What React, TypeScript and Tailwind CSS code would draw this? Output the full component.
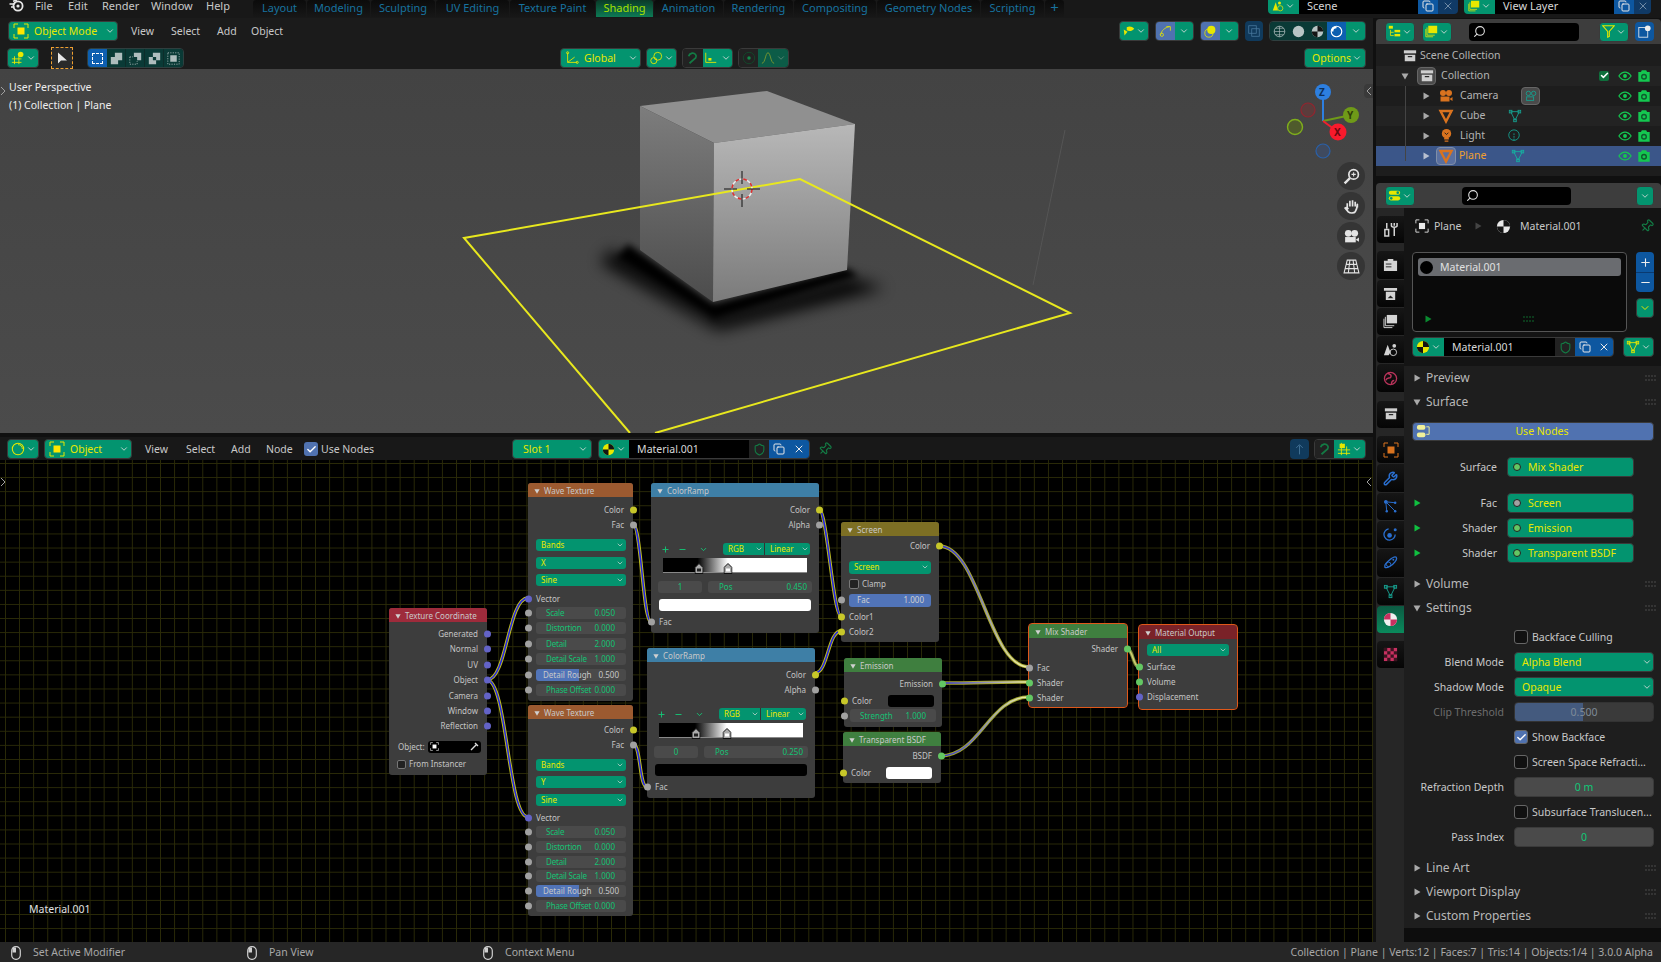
import type { ReactNode } from "react";
import { ChevronDown, Copy, Pin, Search, X, Check, Plus, Minus, Shield, Wrench } from "lucide-react";

const Y = "bg-[#c7c729]";
const G = "bg-[#63c763]";
const P = "bg-[#6363c7]";
const N = "bg-[#a1a1a1]";

// small helpers for the blender icons
function Ic({ s = 14, children, className = "" }: { s?: number; children: ReactNode; className?: string }) {
	return (
		<svg viewBox="0 0 16 16" width={s} height={s} fill="none" className={`shrink-0 ${className}`}>
			{children}
		</svg>
	);
}

const Corners = ({ c, s = 16 }: { c: string; s?: number }) => (
	<Ic s={s}>
		<path d="M1 5V1h4M11 1h4v4M15 11v4h-4M5 15H1v-4" stroke={c} strokeWidth="1" />
		<rect x="4.5" y="4.5" width="7" height="7" fill={c === "#e8e800" ? "#ffe600" : c} />
	</Ic>
);

const MatIcon = ({ c, s = 15 }: { c: string; s?: number }) => (
	<Ic s={s}>
		<circle cx="8" cy="8" r="7" fill={c} />
		<path d="M8 8V1A7 7 0 0 1 15 8ZM8 8V15A7 7 0 0 1 1 8Z" fill="#141414" />
	</Ic>
);

const MeshIcon = ({ c, s = 14 }: { c: string; s?: number }) => (
	<Ic s={s}>
		<path d="M3 3h10L8 13Z" stroke={c} strokeWidth="1" />
		<rect x="1.5" y="1.5" width="3" height="3" fill="#0000" stroke={c} />
		<rect x="11.5" y="1.5" width="3" height="3" fill="#0000" stroke={c} />
		<rect x="6.5" y="11.5" width="3" height="3" fill="#0000" stroke={c} />
	</Ic>
);

const OrangeTri = () => (
	<Ic s={16}>
		<path d="M2.5 3h11L8 13.5Z" stroke="#d9731f" strokeWidth="2.4" />
	</Ic>
);

const Eye = ({ dim = false }: { dim?: boolean }) => (
	<Ic s={14}>
		<path d="M1 8c2-3 4.5-4.5 7-4.5S13 5 15 8c-2 3-4.5 4.5-7 4.5S3 11 1 8Z" stroke={dim ? "#12b84c" : "#14c850"} strokeWidth="1.3" />
		<circle cx="8" cy="8" r="2.2" fill={dim ? "#12b84c" : "#14c850"} />
	</Ic>
);

const RenderCam = () => (
	<Ic s={14}>
		<path d="M1.5 3.5h3l1-2h5l1 2h3v11h-13Z" fill="#14c850" />
		<circle cx="8" cy="8.8" r="3.4" fill="#0e5a2c" />
		<circle cx="8" cy="8.8" r="1.8" fill="#14c850" />
	</Ic>
);

const Chev = ({ c = "#dddddd", s = 10 }: { c?: string; s?: number }) => <ChevronDown size={s} color={c} strokeWidth={2} className="shrink-0" />;

const Tri = ({ open = false, c = "#a9a9a9", s = 8 }: { open?: boolean; c?: string; s?: number }) => (
	<svg width={s} height={s} viewBox="0 0 8 8" className="shrink-0">
		<path d={open ? "M0.5 1.5h7L4 7.5Z" : "M1.5 0.5v7L7.5 4Z"} fill={c} />
	</svg>
);

const Dots = () => (
	<svg width="11" height="6" viewBox="0 0 11 6" className="shrink-0">
		{[0.5, 3.5, 6.5, 9.5].map(x => [0.5, 4.5].map(y => <rect key={`${x}-${y}`} x={x} y={y} width="1" height="1" fill="#777" />))}
	</svg>
);

function Teal({ className = "", children }: { className?: string; children: ReactNode }) {
	return (
		<div className={`flex h-[20px] shrink-0 items-center rounded-[4px] border border-[#3a3a3a] bg-[#03946f] text-[#e8e800] ${className}`}>
			{children}
		</div>
	);
}

const TopTab = ({ label, w, active = false }: { label: string; w: string; active?: boolean }) => (
	<div
		className={`flex h-[17px] shrink-0 items-center justify-center rounded-t-[3px] pb-[2px] ${w} ${
			active ? "bg-[linear-gradient(#0a3a28,#0d7a55)] text-[#a6e000]" : "bg-[linear-gradient(#0b0b0b,#171717)] text-[#17729f]"
		}`}
	>
		{label}
	</div>
);

function TopBar() {
	return (
		<div className="flex h-[18px] shrink-0 items-start overflow-hidden bg-[#181818] text-[11px]">
			<div className="ml-[9px] flex h-[11px] w-[26px] items-center">
				<svg width="15" height="13" viewBox="0 0 15 13">
					<circle cx="9" cy="7" r="4.6" fill="none" stroke="#e6e6e6" strokeWidth="1.8" />
					<circle cx="9" cy="7" r="1.6" fill="#e6e6e6" />
					<path d="M0.5 5h5M2 8h3.5M4 2.2l4-1.2" stroke="#e6e6e6" strokeWidth="1.5" />
				</svg>
			</div>
			<div className="flex h-[11px] items-center text-[#c8c8c8]">
				<div className="w-[33px]">File</div>
				<div className="w-[34px]">Edit</div>
				<div className="w-[49px]">Render</div>
				<div className="w-[55px]">Window</div>
				<div className="w-[47px]">Help</div>
			</div>
			<div className="flex gap-px">
				<TopTab label="Layout" w="w-[53px]" />
				<TopTab label="Modeling" w="w-[63px]" />
				<TopTab label="Sculpting" w="w-[64px]" />
				<TopTab label="UV Editing" w="w-[73px]" />
				<TopTab label="Texture Paint" w="w-[85px]" />
				<TopTab label="Shading" w="w-[57px]" active />
				<TopTab label="Animation" w="w-[69px]" />
				<TopTab label="Rendering" w="w-[69px]" />
				<TopTab label="Compositing" w="w-[82px]" />
				<TopTab label="Geometry Nodes" w="w-[103px]" />
				<TopTab label="Scripting" w="w-[63px]" />
				<TopTab label="+" w="w-[19px] text-[15px]" />
			</div>
			<div className="ml-auto mr-[10px] flex gap-[6px]">
				<SceneField label="Scene" scene />
				<SceneField label="View Layer" />
			</div>
		</div>
	);
}

function SceneField({ label, scene = false }: { label: string; scene?: boolean }) {
	return (
		<div className="-mt-[6px] flex h-[20px] overflow-hidden rounded-b-[4px]">
			<div className="flex w-[31px] items-center justify-center gap-px bg-[#03946f] pt-[4px]">
				{scene ? (
					<Ic s={12}>
						<path d="M1 14 5 3l3 11Z" fill="#e8e800" />
						<circle cx="10" cy="4" r="2" fill="#e8e800" />
						<circle cx="11" cy="11" r="3.5" stroke="#e8e800" />
					</Ic>
				) : (
					<Ic s={12}>
						<path d="M4 1h11v9H4Z" fill="#e8e800" />
						<path d="M2.5 3v9.5H12M1 5v9.5h9" stroke="#e8e800" />
					</Ic>
				)}
				<Chev />
			</div>
			<div className="flex w-[119px] items-center bg-black pl-[8px] pt-[2px] text-[#d8d8d8]">{label}</div>
			<div className="flex w-[20px] items-center justify-center bg-[#0d57a0] pt-[4px]">
				<Copy size={12} color="#e8e8e8" />
			</div>
			<div className={`flex items-center justify-center bg-[#103a66] pt-[4px] ${scene ? "w-[20px]" : "w-[17px]"}`}>
				<X size={12} color="#6f8aa5" />
			</div>
		</div>
	);
}

function SelectModes() {
	const cell = "flex h-full w-[19px] items-center justify-center border-r border-[#0d2d2a] bg-[#0a3a36]";
	return (
		<div className="ml-[14px] flex h-[20px] overflow-hidden rounded-[4px] border border-[#2f3f3f]">
			<div className="flex h-full w-[19px] items-center justify-center bg-[#0d5fb0]">
				<div className="h-[11px] w-[11px] border border-dashed border-white" />
			</div>
			<div className={cell}>
				<Ic s={13}>
					<path d="M1 6h5V1h9v9h-5v5H1Z" fill="#aebdbd" />
				</Ic>
			</div>
			<div className={cell}>
				<Ic s={13}>
					<path d="M6 6V1h9v9h-5V6Z" fill="#aebdbd" />
					<path d="M1 6h4M1 6v9h9v-4" stroke="#aebdbd" strokeDasharray="1.5 1.5" />
				</Ic>
			</div>
			<div className={cell}>
				<Ic s={13}>
					<path d="M1 6h5V1h9v9h-5v5H1ZM6 6v4h4V6Z" fill="#aebdbd" fillRule="evenodd" />
				</Ic>
			</div>
			<div className="flex h-full w-[19px] items-center justify-center bg-[#0a3a36]">
				<Ic s={13}>
					<rect x="1" y="1" width="14" height="14" stroke="#aebdbd" strokeDasharray="1.5 1.5" />
					<rect x="4" y="4" width="8" height="8" fill="#aebdbd" />
				</Ic>
			</div>
		</div>
	);
}

function ViewportHeader() {
	return (
		<div className="flex h-[51px] shrink-0 flex-col gap-[7px] bg-[#1b1b1b] pt-[3px]">
			<div className="flex h-[20px] items-center">
				<Teal className="ml-[8px] w-[110px] gap-[5px] pl-[4px]">
					<Corners c="#e8e800" />
					<span className="flex-1">Object Mode</span>
					<span className="pr-[2px]">
						<Chev />
					</span>
				</Teal>
				<div className="ml-[13px] flex text-[#c8c8c8]">
					<div className="w-[40px]">View</div>
					<div className="w-[46px]">Select</div>
					<div className="w-[34px]">Add</div>
					<div>Object</div>
				</div>
				<div className="ml-auto mr-[7px] flex items-center gap-[6px]">
					<Teal className="w-[30px] justify-center gap-px">
						<Ic s={12}>
							<path d="M5 3c4-2 7-1 10 2-3 3-6 4-10 2ZM1 6l5 3-4 5Z" fill="#e8e800" />
						</Ic>
						<Chev />
					</Teal>
					<div className="flex h-[20px] w-[39px] overflow-hidden rounded-[4px] border border-[#3a3a3a]">
						<div className="flex w-[19px] items-center justify-center bg-[#5072b0]">
							<Ic s={13}>
								<path d="M2 12C3 7 7 3 13 2M9 2h5v5" stroke="#e8e800" />
								<circle cx="3.5" cy="12" r="2" stroke="#e8e800" />
							</Ic>
						</div>
						<div className="flex flex-1 items-center justify-center bg-[#03946f]">
							<Chev />
						</div>
					</div>
					<div className="flex h-[20px] w-[39px] overflow-hidden rounded-[4px] border border-[#3a3a3a]">
						<div className="flex w-[19px] items-center justify-center bg-[#5072b0]">
							<Ic s={13}>
								<circle cx="9" cy="6" r="5" fill="#e8e800" />
								<circle cx="6" cy="10" r="5" stroke="#e8e800" />
							</Ic>
						</div>
						<div className="flex flex-1 items-center justify-center bg-[#03946f]">
							<Chev />
						</div>
					</div>
					<div className="flex h-[20px] w-[18px] items-center justify-center rounded-[4px] bg-[#103a5c]">
						<Ic s={12}>
							<rect x="1" y="1" width="10" height="10" stroke="#4a7ba0" />
							<rect x="5" y="5" width="10" height="10" stroke="#4a7ba0" />
						</Ic>
					</div>
					<div className="flex h-[20px] w-[97px] overflow-hidden rounded-[4px] border border-[#2f3f3f]">
						<div className="flex w-[19px] items-center justify-center bg-[#0a3a36]">
							<Ic s={13}>
								<circle cx="8" cy="8" r="6.5" stroke="#aebdbd" />
								<path d="M1.5 8h13M8 1.5v13M3 4h10M3 12h10" stroke="#aebdbd" strokeWidth=".8" />
							</Ic>
						</div>
						<div className="flex w-[19px] items-center justify-center bg-[#0a3a36]">
							<Ic s={13}>
								<circle cx="8" cy="8" r="7" fill="#b8c4c4" />
							</Ic>
						</div>
						<div className="flex w-[19px] items-center justify-center bg-[#0a3a36]">
							<MatIcon c="#b8c4c4" s={13} />
						</div>
						<div className="flex w-[19px] items-center justify-center bg-[#0d5fb0]">
							<Ic s={13}>
								<circle cx="8" cy="8" r="6.5" stroke="#fff" strokeWidth="1.4" />
								<path d="M3 8c0-3 2-5 5-5" stroke="#fff" strokeWidth="2.2" />
							</Ic>
						</div>
						<div className="flex flex-1 items-center justify-center bg-[#03946f]">
							<Chev />
						</div>
					</div>
				</div>
			</div>
			<div className="flex h-[20px] items-center">
				<Teal className="ml-[7px] w-[32px] justify-center gap-px">
					<Ic s={14}>
						<path d="M1 9h11M1 13h11M4 6v9M9 6v9" stroke="#e8e800" />
						<circle cx="11" cy="4" r="3.2" fill="#e8e800" />
					</Ic>
					<Chev />
				</Teal>
				<div className="ml-[12px] flex h-[22px] w-[22px] items-center justify-center border border-dashed border-[#f0a030] bg-[#2a2a2a]">
					<svg width="10" height="12" viewBox="0 0 10 12">
						<path d="M1 0.5v11l3-3 6 0Z" fill="#e8e8e8" />
					</svg>
				</div>
				<SelectModes />
				<Teal className="ml-[376px] w-[81px] gap-[5px] pl-[4px]">
					<Ic s={14}>
						<path d="M3 2v11h11M3 13l8-6" stroke="#e8e800" />
						<circle cx="3" cy="2" r="1.2" stroke="#e8e800" />
						<circle cx="14" cy="13" r="1.2" stroke="#e8e800" />
					</Ic>
					<span className="flex-1">Global</span>
					<span className="pr-[2px]">
						<Chev />
					</span>
				</Teal>
				<Teal className="ml-[5px] w-[31px] justify-center gap-px">
					<Ic s={14}>
						<circle cx="10" cy="6" r="4.5" stroke="#e8e800" />
						<circle cx="5.5" cy="11" r="3.5" stroke="#e8e800" />
					</Ic>
					<Chev />
				</Teal>
				<div className="ml-[5px] flex h-[20px] w-[51px] overflow-hidden rounded-[4px] border border-[#3a3a3a]">
					<div className="flex w-[20px] items-center justify-center bg-[#222]">
						<Ic s={14}>
							<path d="M4 14 11 8c2-3-1-6-4-5.5C5 3 3.5 4 3 6" stroke="#137a44" strokeWidth="2" />
						</Ic>
					</div>
					<div className="flex flex-1 items-center justify-center gap-[3px] bg-[#03946f]">
						<Ic s={14}>
							<path d="M2 2v11h12" stroke="#e8e800" />
							<rect x="5" y="8" width="3.5" height="3" fill="#e8e800" />
						</Ic>
						<Chev />
					</div>
				</div>
				<div className="ml-[5px] flex h-[20px] w-[51px] overflow-hidden rounded-[4px] border border-[#3a3a3a]">
					<div className="flex w-[19px] items-center justify-center bg-[#222]">
						<Ic s={14}>
							<circle cx="8" cy="8" r="6.5" stroke="#124a2c" />
							<circle cx="8" cy="8" r="2" fill="#138a4a" />
						</Ic>
					</div>
					<div className="flex flex-1 items-center justify-center gap-px bg-[#0c5c47]">
						<Ic s={14}>
							<path d="M1 14c4 0 4-12 7-12s3 12 7 12" stroke="#7f9a30" />
						</Ic>
						<Chev c="#5f8a7a" />
					</div>
				</div>
				<Teal className="ml-auto mr-[7px] w-[62px] justify-between pl-[7px] pr-[3px]">
					<span>Options</span>
					<Chev />
				</Teal>
			</div>
		</div>
	);
}

function Viewport() {
	return (
		<div className="relative h-[364px] shrink-0 overflow-hidden bg-[linear-gradient(#434343,#4b4b4b)]">
			<svg viewBox="0 69 1373 364" className="absolute inset-0 h-full w-full">
				<defs>
					<filter id="soft" x="-30%" y="-50%" width="160%" height="200%">
						<feGaussianBlur stdDeviation="8" />
					</filter>
					<filter id="tight" x="-30%" y="-50%" width="160%" height="200%">
						<feGaussianBlur stdDeviation="3.5" />
					</filter>
					<linearGradient id="left" x1="0" y1="0" x2="0" y2="1">
						<stop offset="0" stopColor="#7d7d7d" />
						<stop offset="1" stopColor="#4c4c4c" />
					</linearGradient>
					<linearGradient id="right" x1="0" y1="0" x2="0" y2="1">
						<stop offset="0" stopColor="#b8b8b8" />
						<stop offset="1" stopColor="#7b7b7b" />
					</linearGradient>
				</defs>
				<path d="M1065 130 1033 285" stroke="#555" strokeWidth="1" />
				<path d="M612 250 715 316 850 278 885 288 718 330 600 262Z" fill="#000" filter="url(#soft)" />
				<path d="M628 244 713 304 847 268 858 276 714 320 616 258Z" fill="#000" filter="url(#tight)" />
				<path d="M640 106 767 91 855 124 714 143Z" fill="#909090" />
				<path d="M640 106 714 143 713 302 640 250Z" fill="url(#left)" />
				<path d="M714 143 855 124 847 270 713 302Z" fill="url(#right)" />
				<path d="M630 433 464 238 800 179 1070 313 655 433" fill="none" stroke="#e8e81e" strokeWidth="2" />
				<circle cx="742" cy="189" r="10" fill="none" stroke="#e03030" strokeWidth="1.5" strokeDasharray="4 4" />
				<circle cx="742" cy="189" r="10" fill="none" stroke="#eee" strokeWidth="1.5" strokeDasharray="4 4" strokeDashoffset="4" />
				<path d="M742 171v13M742 194v13M724 189h13M747 189h13" stroke="#111" strokeWidth="1" />

				{/* gizmo */}
				<circle cx="1308" cy="110" r="7" fill="#5b3c3c" stroke="#92252f" strokeWidth="1.2" />
				<circle cx="1295" cy="127" r="7.5" fill="#4f5b2c" stroke="#7fae1c" strokeWidth="1.4" />
				<circle cx="1323" cy="151" r="7" fill="#3f4a5f" stroke="#2a60a8" strokeWidth="1.2" />
				<path d="M1323 121V92" stroke="#2d7fe0" strokeWidth="2" />
				<path d="M1323 121 1351 115" stroke="#6f9a18" strokeWidth="2" />
				<path d="M1323 121 1338 132" stroke="#f0202f" strokeWidth="2" />
				<circle cx="1323" cy="92" r="8" fill="#2d7fe0" />
				<circle cx="1351" cy="115" r="8" fill="#6f9a18" />
				<circle cx="1338" cy="132" r="8.5" fill="#f81a2c" />
			</svg>
			<div className="absolute left-[9px] top-[9px] leading-[18px] text-[#eeeeee]">
				User Perspective
				<br />
				(1) Collection | Plane
			</div>
			<div className="absolute left-[1319px] top-[17px] text-[10px] font-bold leading-[12px] text-[#0d2f5a]">Z</div>
			<div className="absolute left-[1347px] top-[40px] text-[10px] font-bold leading-[12px] text-[#2f3f08]">Y</div>
			<div className="absolute left-[1334px] top-[57px] text-[10px] font-bold leading-[12px] text-[#6a0810]">X</div>
			<div className="absolute left-0 top-[17px] text-[#999]">
				<svg width="6" height="10" viewBox="0 0 6 10">
					<path d="M1 1l4 4-4 4" stroke="#a0a0a0" fill="none" />
				</svg>
			</div>
			<div className="absolute right-0 top-[15px] flex h-[14px] w-[9px] items-center justify-center rounded-l-[4px] bg-[#3a3a3a]">
				<svg width="6" height="10" viewBox="0 0 6 10">
					<path d="M5 1 1 5l4 4" stroke="#a0a0a0" fill="none" />
				</svg>
			</div>
			<div className="absolute left-[1337px] top-[93px] flex flex-col gap-[2px]">
				<GizmoBtn>
					<circle cx="10" cy="6" r="4.5" stroke="#e4e4e4" strokeWidth="1.6" />
					<path d="M8 6h4M10 4v4" stroke="#e4e4e4" />
					<path d="M6.5 9.5 1.5 14.5" stroke="#e4e4e4" strokeWidth="2.2" />
				</GizmoBtn>
				<GizmoBtn>
					<path d="M4 9V5M6.5 8V2.5M9 8V2M11.5 8V3.5M13.5 9V6c0-1 0 4-2 7-1 1.5-5 1.5-6.5 0L2 9.5c1-1 2-.5 3 1" stroke="#e4e4e4" strokeWidth="1.6" />
				</GizmoBtn>
				<GizmoBtn>
					<circle cx="5" cy="5" r="3.2" fill="#e4e4e4" />
					<circle cx="11" cy="5" r="3.2" fill="#e4e4e4" />
					<rect x="2" y="8.5" width="10" height="5" fill="#e4e4e4" />
					<path d="M12 11l3-2v4Z" fill="#e4e4e4" />
				</GizmoBtn>
				<GizmoBtn>
					<path d="M4 2h8l3 12H1ZM2.5 6h11M1.7 10h12.6M6.5 2 5 14M9.5 2 11 14" stroke="#e4e4e4" strokeWidth="1" />
				</GizmoBtn>
			</div>
		</div>
	);
}

const GizmoBtn = ({ children }: { children: ReactNode }) => (
	<div className="flex h-[28px] w-[28px] items-center justify-center rounded-full bg-[#353535]">
		<Ic s={17}>{children}</Ic>
	</div>
);

function NodeHeader() {
	return (
		<div className="flex h-[23px] shrink-0 items-center bg-[#181818] pt-px">
			<Teal className="ml-[7px] w-[32px] justify-center gap-px">
				<Ic s={14}>
					<circle cx="8" cy="8" r="6.5" stroke="#e8e800" strokeWidth="1.2" />
					<path d="M8 3a5 5 0 0 1 5 5" stroke="#e8e800" />
				</Ic>
				<Chev />
			</Teal>
			<Teal className="ml-[5px] w-[88px] gap-[5px] pl-[4px]">
				<Corners c="#e8e800" />
				<span className="flex-1">Object</span>
				<span className="pr-[2px]">
					<Chev />
				</span>
			</Teal>
			<div className="ml-[13px] flex text-[#c8c8c8]">
				<div className="w-[41px]">View</div>
				<div className="w-[45px]">Select</div>
				<div className="w-[35px]">Add</div>
				<div className="w-[38px]">Node</div>
			</div>
			<div className="flex h-[14px] w-[14px] items-center justify-center rounded-[3px] bg-[#5072b0]">
				<Check size={11} color="#fff" strokeWidth={3} />
			</div>
			<span className="ml-[3px] text-[#c8c8c8]">Use Nodes</span>
			<Teal className="ml-[138px] w-[80px] justify-between pl-[10px] pr-[3px]">
				<span>Slot 1</span>
				<Chev />
			</Teal>
			<div className="ml-[6px] flex h-[20px] overflow-hidden rounded-[4px] border border-[#3a3a3a]">
				<div className="flex w-[30px] items-center justify-center gap-px bg-[#03946f]">
					<MatIcon c="#e8e800" s={13} />
					<Chev />
				</div>
				<div className="flex w-[120px] items-center bg-black pl-[8px] text-[#d8d8d8]">Material.001</div>
				<div className="flex w-[20px] items-center justify-center bg-[#222]">
					<Shield size={13} color="#137a44" />
				</div>
				<div className="flex w-[20px] items-center justify-center bg-[#0d57a0]">
					<Copy size={12} color="#e8e8e8" />
				</div>
				<div className="flex w-[20px] items-center justify-center bg-[#0d57a0]">
					<X size={12} color="#e8e8e8" />
				</div>
			</div>
			<Pin size={14} color="#137a44" className="ml-[8px] rotate-45" />
			<div className="ml-auto mr-[7px] flex items-center gap-[5px]">
				<div className="flex h-[20px] w-[19px] items-center justify-center rounded-[4px] bg-[#103a5c]">
					<Ic s={13}>
						<path d="M8 14V3M4 6l4-4 4 4" stroke="#4a7ba0" />
					</Ic>
				</div>
				<div className="flex h-[20px] w-[52px] overflow-hidden rounded-[4px] border border-[#3a3a3a]">
					<div className="flex w-[19px] items-center justify-center bg-[#222]">
						<Ic s={14}>
							<path d="M4 14 11 8c2-3-1-6-4-5.5C5 3 3.5 4 3 6" stroke="#137a44" strokeWidth="2" />
						</Ic>
					</div>
					<div className="flex flex-1 items-center justify-center gap-px bg-[#03946f]">
						<Ic s={14}>
							<path d="M5 1v14M1 9h14M11 5v10M1 13h14" stroke="#e8e800" />
							<rect x="3" y="2" width="6" height="5" fill="#e8e800" />
						</Ic>
						<Chev />
					</div>
				</div>
			</div>
		</div>
	);
}

// ---- node editor bits

const Sock = ({ col, pos }: { col: string; pos: string }) => (
	<span className={`absolute top-1/2 z-10 h-[7px] w-[7px] -translate-y-1/2 rounded-full ${col} ${pos}`} />
);

const Out = ({ label, col }: { label: string; col: string }) => (
	<div className="relative flex h-[15px] items-center justify-end pr-[9px]">
		{label}
		<Sock col={col} pos="-right-[3.5px]" />
	</div>
);

const In = ({ label, col, className = "" }: { label: string; col: string; className?: string }) => (
	<div className={`relative flex h-[15px] items-center pl-[8px] ${className}`}>
		{label}
		<Sock col={col} pos="-left-[3.5px]" />
	</div>
);

const Pill = ({ label, className = "" }: { label: string; className?: string }) => (
	<div className={`flex h-[12px] items-center justify-between rounded-[3px] bg-[#03946f] pl-[5px] pr-[2px] text-[#e8e800] ${className}`}>
		{label}
		<Chev s={8} />
	</div>
);

const Field = ({ label, value, className = "" }: { label: string; value: string; className?: string }) => (
	<div className={`relative ml-[8px] mr-[7px] flex h-[12px] items-center justify-between rounded-[3px] bg-[#4a4a4a] pl-[10px] pr-[11px] text-[#14c274] ${className}`}>
		<span className="whitespace-nowrap tracking-[-0.2px]">{label}</span>
		<span>{value}</span>
		<Sock col={N} pos="-left-[11.5px]" />
	</div>
);

const Rough = ({ className = "" }: { className?: string }) => (
	<div className={`relative ml-[8px] mr-[7px] flex h-[12px] items-center justify-between rounded-[3px] bg-[linear-gradient(90deg,#5174b8_48%,#4a4a4a_48%)] pl-[7px] pr-[7px] text-[#c8c8c8] ${className}`}>
		<span>Detail Rough</span>
		<span>0.500</span>
		<Sock col={N} pos="-left-[11.5px]" />
	</div>
);

function GNode({ className, head, title, children, sel = false }: { className: string; head: string; title: string; children: ReactNode; sel?: boolean }) {
	return (
		<div className={`absolute rounded-[3px] bg-[#3d3d3d] text-[8px] text-[#c4c4c4] ${sel ? "outline outline-1 outline-[#e0581a]" : ""} ${className}`}>
			<div className={`flex h-[14px] items-center gap-[4px] rounded-t-[3px] pl-[6px] pt-px text-[#c9c9c9] ${head}`}>
				<Tri open c="#d0d0d0" s={6} />
				{title}
			</div>
			{children}
		</div>
	);
}

const Handle = ({ pos, fill }: { pos: string; fill: string }) => (
	<svg width="9" height="11" viewBox="0 0 9 11" className={`absolute -bottom-[2px] -translate-x-1/2 ${pos}`}>
		<path d="M4.5 0.5 8.5 4.5v6h-8v-6Z" fill="#aaa" stroke="#111" />
		<rect x="2.5" y="5.5" width="4" height="3" fill={fill} />
	</svg>
);

function RampNode({ className, value, pos, grad, bar, h1, h2 }: { className: string; value: string; pos: string; grad: string; bar: string; h1: string; h2: string }) {
	return (
		<GNode className={className} head="bg-[#3e7fa6]" title="ColorRamp">
			<div className="mt-[5px]">
				<Out label="Color" col={Y} />
				<Out label="Alpha" col={N} />
			</div>
			<div className="mt-[11px] flex h-[12px] items-center">
				<Plus size={9} color="#14c274" strokeWidth={2.5} className="ml-[10px]" />
				<Minus size={9} color="#14c274" strokeWidth={2.5} className="ml-[8px]" />
				<ChevronDown size={9} color="#14c274" strokeWidth={2.5} className="ml-[12px]" />
				<div className="ml-[15px] flex h-[12px] w-[87px] overflow-hidden rounded-[3px] text-[#e8e800]">
					<div className="flex w-[42px] items-center justify-between border-r border-[#333] bg-[#03946f] pl-[5px] pr-px">
						RGB
						<Chev s={8} />
					</div>
					<div className="flex flex-1 items-center justify-between bg-[#03946f] pl-[5px] pr-px">
						Linear
						<Chev s={8} />
					</div>
				</div>
			</div>
			<div className={`relative ml-[12px] mt-[3px] h-[15px] w-[144px] border-b border-[#888] ${grad}`}>
				<Handle pos={h1} fill="#222" />
				<Handle pos={h2} fill="#fff" />
			</div>
			<div className="ml-[7px] mt-[8px] flex h-[12px] gap-[6px] text-[#14c274]">
				<div className="flex w-[44px] items-center justify-center rounded-[3px] bg-[#4a4a4a]">{value}</div>
				<div className="flex w-[104px] items-center justify-between rounded-[3px] bg-[#4a4a4a] pl-[11px] pr-[5px]">
					<span>Pos</span>
					<span>{pos}</span>
				</div>
			</div>
			<div className={`ml-[8px] mt-[6px] h-[12px] w-[152px] rounded-[3px] ${bar}`} />
			<In label="Fac" col={N} className="mt-[3.5px]" />
		</GNode>
	);
}

const Links = () => {
	const data: [number, number, number, number, number, string, string, string][] = [
		[487, 680, 528, 598, 20, "#2222e8", "#2222e8", "#c0c020"],
		[487, 680, 528, 817, 20, "#2222e8", "#2222e8", "#c0c020"],
		[633, 524, 651, 622, 8, "#2222e8", "#2222e8", "#c0c020"],
		[633, 744, 647, 787, 8, "#2222e8", "#2222e8", "#c0c020"],
		[819, 509, 841, 616, 8, "#2222e8", "#2222e8", "#c0c020"],
		[815, 673, 841, 631, 13, "#2222e8", "#2222e8", "#c0c020"],
		[939, 546, 1029, 667, 40, "#3030d8", "#f0f0a0", "#a8a830"],
		[942, 683, 1029, 682, 40, "#3030d8", "#f0f0a0", "#a8a830"],
		[940, 756, 1029, 697, 40, "#3030d8", "#f0f0a0", "#a0a830"],
		[1127, 649, 1139, 667, 6, "#d0d070", "#d0d070", "#7f9040"],
	];
	return (
		<svg viewBox="0 460 1373 482" className="absolute inset-0 h-full w-full">
			<defs>
				{data.map((l, i) => (
					<linearGradient key={i} id={`lk${i}`} gradientUnits="userSpaceOnUse" x1={l[0]} y1={l[1]} x2={l[2]} y2={l[3]}>
						<stop offset="0" stopColor={l[5]} />
						<stop offset="1" stopColor={l[6]} />
					</linearGradient>
				))}
			</defs>
			{data.map((l, i) => {
				const d = `M${l[0]} ${l[1]}C${l[0] + l[4]} ${l[1]} ${l[2] - l[4]} ${l[3]} ${l[2]} ${l[3]}`;
				return (
					<g key={i} fill="none">
						<path d={d} stroke={l[7]} strokeWidth="3.4" />
						<path d={d} stroke={`url(#lk${i})`} strokeWidth="1.5" />
					</g>
				);
			})}
		</svg>
	);
};

function NodeCanvas() {
	return (
		<div className="relative flex-1 overflow-hidden bg-black bg-[linear-gradient(#2a2a08_1px,transparent_1px),linear-gradient(90deg,#2a2a08_1px,transparent_1px)] bg-[size:14.1px_14.1px] bg-[position:5px_3px]">
			<Links />

			<GNode className="left-[389px] top-[148px] h-[167px] w-[98px]" head="bg-[#9e2b3b]" title="Texture Coordinate">
				<div className="mt-[4.5px] flex flex-col gap-[0.4px]">
					<Out label="Generated" col={P} />
					<Out label="Normal" col={P} />
					<Out label="UV" col={P} />
					<Out label="Object" col={P} />
					<Out label="Camera" col={P} />
					<Out label="Window" col={P} />
					<Out label="Reflection" col={P} />
				</div>
				<div className="mt-[7px] flex items-center pl-[9px]">
					Object:
					<div className="ml-[3px] flex h-[12px] w-[53px] items-center justify-between rounded-[3px] bg-black px-[2px]">
						<Corners c="#ffffff" s={9} />
						<svg width="9" height="9" viewBox="0 0 9 9">
							<path d="M1 8 6 3M5 1l3 3" stroke="#ddd" strokeWidth="1.4" />
						</svg>
					</div>
				</div>
				<div className="mt-[7px] flex items-center gap-[3px] pl-[8px]">
					<div className="h-[9px] w-[9px] rounded-[2px] border border-[#777] bg-[#222]" />
					From Instancer
				</div>
			</GNode>

			<GNode className="left-[528px] top-[23px] h-[218px] w-[105px]" head="bg-[#9c5a30]" title="Wave Texture">
				<div className="mt-[5px]">
					<Out label="Color" col={Y} />
					<Out label="Fac" col={N} />
				</div>
				<Pill label="Bands" className="ml-[8px] mr-[7px] mt-[7px]" />
				<Pill label="X" className="ml-[8px] mr-[7px] mt-[6px]" />
				<Pill label="Sine" className="ml-[8px] mr-[7px] mt-[5px]" />
				<In label="Vector" col={P} className="mt-[5px]" />
				<Field label="Scale" value="0.050" className="mt-[1px]" />
				<Field label="Distortion" value="0.000" className="mt-[3.4px]" />
				<Field label="Detail" value="2.000" className="mt-[3.4px]" />
				<Field label="Detail Scale" value="1.000" className="mt-[3.4px]" />
				<Rough className="mt-[3.4px]" />
				<Field label="Phase Offset" value="0.000" className="mt-[3.4px]" />
			</GNode>

			<GNode className="left-[528px] top-[245px] h-[211px] w-[105px]" head="bg-[#9c5a30]" title="Wave Texture">
				<div className="mt-[3px]">
					<Out label="Color" col={Y} />
					<Out label="Fac" col={N} />
				</div>
				<Pill label="Bands" className="ml-[8px] mr-[7px] mt-[7px]" />
				<Pill label="Y" className="ml-[8px] mr-[7px] mt-[5px]" />
				<Pill label="Sine" className="ml-[8px] mr-[7px] mt-[6px]" />
				<In label="Vector" col={P} className="mt-[4px]" />
				<Field label="Scale" value="0.050" className="mt-[1px]" />
				<Field label="Distortion" value="0.000" className="mt-[2.8px]" />
				<Field label="Detail" value="2.000" className="mt-[2.8px]" />
				<Field label="Detail Scale" value="1.000" className="mt-[2.8px]" />
				<Rough className="mt-[2.8px]" />
				<Field label="Phase Offset" value="0.000" className="mt-[2.8px]" />
			</GNode>

			<RampNode
				className="left-[651px] top-[23px] h-[150px] w-[168px]"
				value="1"
				pos="0.450"
				grad="bg-[linear-gradient(90deg,#000_24%,#fff_45%)]"
				bar="bg-white"
				h1="left-[36px]"
				h2="left-[65px]"
			/>
			<RampNode
				className="left-[647px] top-[188px] h-[150px] w-[168px]"
				value="0"
				pos="0.250"
				grad="bg-[linear-gradient(90deg,#000_25%,#fff_47%)]"
				bar="bg-black"
				h1="left-[37px]"
				h2="left-[68px]"
			/>

			<GNode className="left-[841px] top-[62px] h-[120px] w-[98px]" head="bg-[#7d6f24]" title="Screen">
				<div className="mt-[2px]">
					<Out label="Color" col={Y} />
				</div>
				<Pill label="Screen" className="mx-[8px] mt-[7.5px] h-[13px]" />
				<div className="ml-[8px] mt-[5px] flex items-center gap-[3px]">
					<div className="h-[10px] w-[10px] rounded-[2px] border border-[#777] bg-[#222]" />
					Clamp
				</div>
				<div className="relative mx-[8px] mt-[5px] flex h-[13px] items-center justify-between rounded-[3px] bg-[#5174b8] pl-[8px] pr-[7px] text-[#d0d0d0]">
					<span>Fac</span>
					<span>1.000</span>
					<Sock col={N} pos="-left-[11.5px]" />
				</div>
				<In label="Color1" col={Y} className="mt-[2.5px]" />
				<In label="Color2" col={Y} />
			</GNode>

			<GNode className="left-[844px] top-[198px] h-[69px] w-[98px]" head="bg-[#3f7f3f]" title="Emission">
				<div className="mt-[4px]">
					<Out label="Emission" col={G} />
				</div>
				<div className="relative mt-[4px] flex h-[12px] items-center pl-[8px]">
					Color
					<div className="absolute left-[44px] top-0 h-[12px] w-[46px] rounded-[3px] bg-black" />
					<Sock col={Y} pos="-left-[3.5px]" />
				</div>
				<div className="relative mx-[6px] mt-[2px] flex h-[13px] items-center justify-between rounded-[3px] bg-[#4a4a4a] pl-[10px] pr-[10px] text-[#14c274]">
					<span>Strength</span>
					<span>1.000</span>
					<Sock col={N} pos="-left-[9.5px]" />
				</div>
			</GNode>

			<GNode className="left-[843px] top-[272px] h-[51px] w-[98px]" head="bg-[#3f7f3f]" title="Transparent BSDF">
				<div className="mt-[2.5px]">
					<Out label="BSDF" col={G} />
				</div>
				<div className="relative mt-[3px] flex h-[12px] items-center pl-[8px]">
					Color
					<div className="absolute left-[43px] top-0 h-[12px] w-[46px] rounded-[3px] bg-white" />
					<Sock col={Y} pos="-left-[3.5px]" />
				</div>
			</GNode>

			<GNode sel className="left-[1029px] top-[164px] h-[83px] w-[98px]" head="bg-[#3f7f3f]" title="Mix Shader">
				<div className="mt-[3.5px]">
					<Out label="Shader" col={G} />
				</div>
				<In label="Fac" col={N} className="mt-[3.5px]" />
				<In label="Shader" col={G} />
				<In label="Shader" col={G} />
			</GNode>

			<GNode sel className="left-[1139px] top-[165px] h-[84px] w-[98px]" head="bg-[#7a2228]" title="Material Output">
				<Pill label="All" className="mx-[8px] mt-[5px]" />
				<In label="Surface" col={G} className="mt-[3.5px]" />
				<In label="Volume" col={G} />
				<In label="Displacement" col={P} />
			</GNode>

			<div className="absolute bottom-[28px] left-[29px] text-[#e0e0e0]">Material.001</div>
			<div className="absolute left-0 top-[17px]">
				<svg width="6" height="10" viewBox="0 0 6 10">
					<path d="M1 1l4 4-4 4" stroke="#a0a0a0" fill="none" />
				</svg>
			</div>
			<div className="absolute left-[1366px] top-[17px]">
				<svg width="6" height="10" viewBox="0 0 6 10">
					<path d="M5 1 1 5l4 4" stroke="#a0a0a0" fill="none" />
				</svg>
			</div>
		</div>
	);
}

// ---- outliner

function OutRow({ className = "", children, eye = true, check = false }: { className?: string; children: ReactNode; eye?: boolean; check?: boolean }) {
	return (
		<div className={`flex h-[20px] items-center ${className}`}>
			{children}
			{eye && (
				<div className="ml-auto mr-[10px] flex items-center gap-[5px]">
					{check && (
						<div className="mr-[4px] flex h-[10px] w-[10px] items-center justify-center rounded-[2px] bg-[#0f6f3c]">
							<Check size={9} color="#fff" strokeWidth={4} />
						</div>
					)}
					<Eye />
					<RenderCam />
				</div>
			)}
		</div>
	);
}

function Outliner() {
	return (
		<div className="flex h-[157px] shrink-0 flex-col overflow-hidden rounded-t-[4px] bg-[#1d1d1d]">
			<div className="flex h-[25px] shrink-0 items-center bg-[#3d3d3d]">
				<Teal className="ml-[9px] w-[30px] justify-center gap-px">
					<Ic s={13}>
						<path d="M3 6v7h4M3 9h4" stroke="#e8e800" />
						<rect x="1" y="1" width="5" height="3.5" fill="#e8e800" />
						<rect x="8" y="6" width="7" height="3" fill="#e8e800" />
						<rect x="8" y="11" width="7" height="3" fill="#e8e800" />
					</Ic>
					<Chev />
				</Teal>
				<Teal className="ml-[7px] w-[30px] justify-center gap-px">
					<Ic s={13}>
						<path d="M4 1h11v9H4Z" fill="#e8e800" />
						<path d="M2.5 3v9.5H12M1 5v9.5h9" stroke="#e8e800" />
					</Ic>
					<Chev />
				</Teal>
				<div className="ml-[17px] flex h-[18px] w-[110px] items-center rounded-[4px] bg-black pl-[4px]">
					<Search size={13} color="#e0e0e0" className="-scale-x-100" />
				</div>
				<Teal className="ml-[20px] w-[30px] justify-center gap-px">
					<Ic s={13}>
						<path d="M1 1h14L9 8v6l-2 1V8Z" stroke="#e8e800" strokeWidth="1.3" />
					</Ic>
					<Chev />
				</Teal>
				<div className="ml-[6px] flex h-[19px] w-[19px] items-center justify-center rounded-[4px] bg-[#0d57a0]">
					<Ic s={13}>
						<rect x="1" y="3" width="11" height="12" stroke="#eee" />
						<circle cx="12" cy="4" r="3.5" fill="#eee" />
					</Ic>
				</div>
			</div>
			<div className="pt-[1.5px]">
				<OutRow eye={false} className="bg-[#1d1d1d]">
					<div className="ml-[23px] flex w-[21px] justify-center">
						<BoxIcon />
					</div>
					<span className="text-[#b4b4b4]">Scene Collection</span>
				</OutRow>
				<OutRow check className="bg-[#232323]">
					<div className="ml-[25px] flex w-[9px]">
						<Tri open />
					</div>
					<div className="ml-[7px] flex h-[18px] w-[19px] items-center justify-center rounded-[4px] border border-[#666] bg-[#4a4a4a]">
						<BoxIcon />
					</div>
					<span className="ml-[5px] text-[#b4b4b4]">Collection</span>
				</OutRow>
				<div className="relative">
					<div className="absolute left-[29px] top-0 h-[75px] w-px bg-[#444]" />
					<OutRow className="bg-[#1d1d1d]">
						<div className="ml-[46px] flex w-[9px]">
							<Tri />
						</div>
						<div className="ml-[7px] flex w-[16px] justify-center">
							<Ic s={16}>
								<circle cx="5" cy="5" r="3" fill="#d9731f" />
								<circle cx="11" cy="5" r="3" fill="#d9731f" />
								<rect x="2.5" y="8.5" width="9" height="5" fill="#d9731f" />
								<path d="M11.5 11l3-2v4Z" fill="#d9731f" />
							</Ic>
						</div>
						<span className="ml-[6px] w-[54px] text-[#b4b4b4]">Camera</span>
						<div className="ml-[7px] flex h-[18px] w-[19px] items-center justify-center rounded-[4px] border border-[#666] bg-[#4a4a4a]">
							<Ic s={14}>
								<circle cx="5" cy="5" r="2.5" stroke="#16a090" />
								<circle cx="11" cy="5" r="2.5" stroke="#16a090" />
								<rect x="3" y="9" width="8" height="4" stroke="#16a090" />
							</Ic>
						</div>
					</OutRow>
					<OutRow className="bg-[#232323]">
						<div className="ml-[46px] flex w-[9px]">
							<Tri />
						</div>
						<div className="ml-[7px] flex w-[16px] justify-center">
							<OrangeTri />
						</div>
						<span className="ml-[6px] w-[48px] text-[#b4b4b4]">Cube</span>
						<MeshIcon c="#16a090" />
					</OutRow>
					<OutRow className="bg-[#1d1d1d]">
						<div className="ml-[46px] flex w-[9px]">
							<Tri />
						</div>
						<div className="ml-[7px] flex w-[16px] justify-center">
							<Ic s={15}>
								<circle cx="8" cy="6" r="5" fill="#d9731f" />
								<path d="M5.5 11.5h5M6 14h4" stroke="#d9731f" strokeWidth="1.5" />
								<path d="M6 5l2 2 2-2" stroke="#1d1d1d" />
							</Ic>
						</div>
						<span className="ml-[6px] w-[47px] text-[#b4b4b4]">Light</span>
						<Ic s={14}>
							<circle cx="8" cy="7" r="6" stroke="#16a090" />
							<path d="M8 5v9" stroke="#16a090" strokeDasharray="2 1" />
						</Ic>
					</OutRow>
					<OutRow className="bg-[#3b5689]">
						<div className="ml-[46px] flex w-[9px]">
							<Tri c="#b8c0d0" />
						</div>
						<div className="ml-[5px] flex h-[18px] w-[20px] items-center justify-center rounded-[4px] border border-[#7f8ea8] bg-[#5a70a0]">
							<OrangeTri />
						</div>
						<span className="ml-[3px] w-[52px] text-[#f0a030]">Plane</span>
						<MeshIcon c="#16b0a0" />
					</OutRow>
				</div>
			</div>
		</div>
	);
}

const BoxIcon = () => (
	<Ic s={14}>
		<rect x="1" y="1.5" width="14" height="3.5" fill="#cfcfcf" />
		<path d="M2 6.5h12V14H2Z" fill="#cfcfcf" />
		<rect x="5.5" y="8" width="5" height="1.4" fill="#2a2a2a" />
	</Ic>
);

// ---- properties editor

function PTab({ children, active = false }: { children: ReactNode; active?: boolean }) {
	return (
		<div
			className={`ml-px flex h-[27.3px] w-[27px] shrink-0 items-center justify-center rounded-l-[4px] ${
				active ? "bg-[linear-gradient(#0c5a42,#0a8a5c)]" : "bg-[linear-gradient(#161616,#050505)]"
			}`}
		>
			{children}
		</div>
	);
}

function TabStrip() {
	return (
		<div className="flex w-[28px] shrink-0 flex-col gap-px bg-[#262626] pt-[8px]">
			<PTab>
				<Ic s={15}>
					<path d="M4 1v6M2 8h4v7H2ZM12 1v3M9 1v3c0 2 6 2 6 0V1M12 5v10" stroke="#d4d4d4" strokeWidth="1.6" />
				</Ic>
			</PTab>
			<div className="h-[6px]" />
			<PTab>
				<Ic s={15}>
					<path d="M1 4h4V2h6v2h4v11H1Z" fill="#d4d4d4" />
					<rect x="3" y="7" width="6" height="1" fill="#222" />
					<rect x="3" y="10" width="6" height="1" fill="#222" />
				</Ic>
			</PTab>
			<PTab>
				<Ic s={15}>
					<path d="M1 2h14v3H1ZM3 6h10v9H3Z" fill="#d4d4d4" />
					<path d="M5 13l3-3 3 3Z" fill="#222" />
				</Ic>
			</PTab>
			<PTab>
				<Ic s={15}>
					<path d="M4 1h11v9H4Z" fill="#d4d4d4" />
					<path d="M2.5 3v9.5H12M1 5v9.5h9" stroke="#d4d4d4" />
				</Ic>
			</PTab>
			<PTab>
				<Ic s={15}>
					<path d="M1 14 5 3l3 8-2 3Z" fill="#d4d4d4" />
					<circle cx="12" cy="4" r="2" fill="#d4d4d4" />
					<circle cx="11" cy="11" r="3.5" stroke="#d4d4d4" />
				</Ic>
			</PTab>
			<PTab>
				<Ic s={15}>
					<circle cx="8" cy="8" r="6.5" stroke="#b8335a" strokeWidth="1.4" />
					<path d="M5 2c2 2 5 2 3 5-2 1-4 0-5 3M12 10c-2 0-3 1-3 4" stroke="#b8335a" strokeWidth="1.6" />
				</Ic>
			</PTab>
			<div className="h-[7px]" />
			<PTab>
				<BoxIcon />
			</PTab>
			<div className="h-[6px]" />
			<PTab>
				<Corners c="#d9731f" />
			</PTab>
			<PTab>
				<Wrench size={15} color="#2a6fd0" strokeWidth={2.4} />
			</PTab>
			<PTab>
				<Ic s={15}>
					<path d="M3 3l10 1M3 3l1 10M3 3l10 10" stroke="#2a6fd0" />
					<circle cx="3" cy="3" r="2" fill="#2a6fd0" />
					<circle cx="13" cy="4" r="1.3" fill="#2a6fd0" />
					<circle cx="13" cy="13" r="1.3" fill="#2a6fd0" />
					<circle cx="4" cy="13" r="1.3" fill="#2a6fd0" />
				</Ic>
			</PTab>
			<PTab>
				<Ic s={15}>
					<circle cx="7" cy="9" r="2.5" fill="#2a6fd0" />
					<circle cx="13" cy="3" r="1.6" fill="#2a6fd0" />
					<path d="M13 8a6 6 0 1 1-7-6" stroke="#2a6fd0" strokeWidth="1.4" />
				</Ic>
			</PTab>
			<PTab>
				<Ic s={15}>
					<path d="M2 11c0-2 8-9 11-9 2 0 2 3 0 5-3 4-9 8-11 6Z" stroke="#2a6fd0" strokeWidth="1.4" />
					<circle cx="6" cy="10" r="2.4" stroke="#2a6fd0" />
					<circle cx="11" cy="5" r="1" fill="#2a6fd0" />
				</Ic>
			</PTab>
			<PTab>
				<MeshIcon c="#16a090" s={15} />
			</PTab>
			<PTab active>
				<Ic s={15}>
					<circle cx="8" cy="8" r="7" fill="#f0f0f0" />
					<path d="M8 8V1A7 7 0 0 0 1 8ZM8 8V15A7 7 0 0 0 15 8Z" fill="#c83060" />
				</Ic>
			</PTab>
			<div className="h-[6px]" />
			<PTab>
				<Ic s={15}>
					<rect x="1" y="1" width="14" height="14" fill="#c83060" />
					<path d="M1 1h3.5v3.5H1ZM8 1h3.5v3.5H8ZM4.5 4.5H8V8H4.5ZM11.5 4.5H15V8h-3.5ZM1 8h3.5v3.5H1ZM8 8h3.5v3.5H8ZM4.5 11.5H8V15H4.5ZM11.5 11.5H15V15h-3.5Z" fill="#3a1420" />
				</Ic>
			</PTab>
		</div>
	);
}

const Dot = ({ col }: { col: string }) => <span className={`h-[8px] w-[8px] rounded-full border border-[#222] ${col}`} />;

function NodeLink({ label, name, dot, arrow = true }: { label: string; name: string; dot: string; arrow?: boolean }) {
	return (
		<div className="flex h-[20px] items-center">
			<div className="flex w-[19px] justify-end pr-[2px]">{arrow && <Tri c="#10c040" />}</div>
			<div className="w-[84px] pr-[10px] text-right text-[#c8c8c8]">{label}</div>
			<Teal className="w-[127px] gap-[7px] pl-[5px]">
				<Dot col={dot} />
				{name}
			</Teal>
		</div>
	);
}

const PanelHead = ({ label, open = false }: { label: string; open?: boolean }) => (
	<div className="flex h-[24px] items-center pl-[9px] pr-[5px] text-[12px] text-[#b8b8b8]">
		<Tri open={open} />
		<span className="ml-[5px] flex-1">{label}</span>
		<Dots />
	</div>
);

const SetLabel = ({ label, dim = false }: { label: string; dim?: boolean }) => (
	<div className={`w-[110px] shrink-0 pr-[10px] text-right ${dim ? "text-[#6d6d6d]" : "text-[#c8c8c8]"}`}>{label}</div>
);

const CheckRow = ({ label, on = false }: { label: string; on?: boolean }) => (
	<div className="flex h-[20px] items-center pl-[110px] text-[#c8c8c8]">
		<div className={`flex h-[14px] w-[14px] items-center justify-center rounded-[3px] border border-[#666] ${on ? "bg-[#5072b0]" : "bg-[#111]"}`}>
			{on && <Check size={11} color="#fff" strokeWidth={3} />}
		</div>
		<span className="ml-[4px] whitespace-nowrap">{label}</span>
	</div>
);

function Properties() {
	return (
		<div className="flex flex-1 flex-col overflow-hidden rounded-t-[4px]">
			<div className="flex h-[25px] shrink-0 items-center bg-[#3d3d3d]">
				<Teal className="ml-[9px] h-[18px] w-[30px] justify-center gap-px">
					<Ic s={13}>
						<rect x="1" y="2" width="14" height="5" rx="2.5" fill="#e8e800" />
						<rect x="1" y="9" width="14" height="5" rx="2.5" fill="#e8e800" />
						<circle cx="12" cy="4.5" r="1.6" fill="#03946f" />
						<circle cx="4" cy="11.5" r="1.6" fill="#03946f" />
					</Ic>
					<Chev />
				</Teal>
				<div className="ml-[47px] flex h-[18px] w-[109px] items-center rounded-[4px] bg-black pl-[4px]">
					<Search size={13} color="#e0e0e0" className="-scale-x-100" />
				</div>
				<Teal className="ml-auto mr-[7px] h-[18px] w-[18px] justify-center">
					<Chev />
				</Teal>
			</div>
			<div className="flex flex-1">
				<TabStrip />
				<div className="flex flex-1 flex-col bg-[#0d0d0d]">
					<div className="flex h-[158px] shrink-0 flex-col bg-[#141414] pl-[8px] pr-[7px]">
						<div className="flex h-[36px] shrink-0 items-center text-[#c8c8c8]">
							<div className="ml-[3px]">
								<Corners c="#e8e8e8" s={14} />
							</div>
							<span className="ml-[5px] w-[40px]">Plane</span>
							<Tri c="#444" />
							<div className="ml-[14px]">
								<MatIcon c="#e8e8e8" s={15} />
							</div>
							<span className="ml-[9px]">Material.001</span>
							<Pin size={14} color="#137a44" className="ml-auto rotate-45" />
						</div>
						<div className="mt-[8px] flex">
							<div className="relative h-[80px] w-[215px] rounded-[4px] border border-[#555] bg-[#0a0a0a]">
								<div className="ml-[5px] mt-[5px] flex h-[18px] w-[203px] items-center rounded-[3px] bg-[#6a6c70] pl-[2px] text-[#e0e0e0]">
									<span className="h-[13px] w-[13px] rounded-full bg-black" />
									<span className="ml-[7px]">Material.001</span>
								</div>
								<div className="absolute bottom-[8px] left-[11px]">
									<Tri c="#0a8a30" />
								</div>
								<div className="absolute bottom-[9px] left-[110px]">
									<svg width="11" height="6" viewBox="0 0 11 6">
										{[0.5, 3.5, 6.5, 9.5].map(x => [0.5, 4.5].map(y => <rect key={`${x}-${y}`} x={x} y={y} width="1" height="1" fill="#14c850" />))}
									</svg>
								</div>
							</div>
							<div className="ml-[9px] flex w-[18px] flex-col">
								<div className="flex h-[20px] items-center justify-center rounded-t-[4px] bg-[#0d57a0]">
									<Plus size={13} color="#eee" />
								</div>
								<div className="flex h-[20px] items-center justify-center rounded-b-[4px] border-t border-[#0a3a70] bg-[#0d57a0]">
									<Minus size={13} color="#eee" />
								</div>
								<Teal className="mt-[6px] justify-center">
									<Chev c="#e8e800" s={12} />
								</Teal>
							</div>
						</div>
						<div className="mt-[5px] flex">
							<div className="flex h-[20px] w-[202px] overflow-hidden rounded-[4px] border border-[#3a3a3a]">
								<div className="flex w-[31px] items-center justify-center gap-px bg-[#03946f]">
									<MatIcon c="#e8e800" s={14} />
									<Chev />
								</div>
								<div className="flex w-[111px] items-center bg-black pl-[8px] text-[#d8d8d8]">Material.001</div>
								<div className="flex w-[20px] items-center justify-center bg-[#222]">
									<Shield size={13} color="#137a44" />
								</div>
								<div className="flex w-[20px] items-center justify-center bg-[#0d57a0]">
									<Copy size={12} color="#e8e8e8" />
								</div>
								<div className="flex flex-1 items-center justify-center bg-[#0d57a0]">
									<X size={12} color="#e8e8e8" />
								</div>
							</div>
							<Teal className="ml-[9px] w-[31px] justify-center gap-px">
								<MeshIcon c="#e8e800" />
								<Chev />
							</Teal>
						</div>
					</div>
					<div className="shrink-0 bg-[#1e1e1e]">
						<PanelHead label="Preview" />
						<PanelHead label="Surface" open />
						<div className="flex flex-col gap-[5px] pb-[9px]">
							<div className="ml-[8px] mr-[7px] mt-[8px] flex h-[19px] items-center rounded-[4px] border border-[#3a3a3a] bg-[#5072b0] pl-[3px] text-[#e8e800]">
								<Ic s={15}>
									<rect x="1" y="1" width="9" height="5" rx="2" fill="#f0f09a" />
									<rect x="1" y="9" width="9" height="5" rx="2" fill="#f0f09a" />
									<path d="M11 3h3v8h-3" stroke="#f0f09a" />
								</Ic>
								<span className="flex-1 text-center">Use Nodes</span>
							</div>
							<div className="mt-[11px]">
								<NodeLink label="Surface" name="Mix Shader" dot="bg-[#63c763]" arrow={false} />
							</div>
							<div className="mt-[11px] flex flex-col gap-[5px]">
								<NodeLink label="Fac" name="Screen" dot="bg-[#a1a1a1]" />
								<NodeLink label="Shader" name="Emission" dot="bg-[#63c763]" />
								<NodeLink label="Shader" name="Transparent BSDF" dot="bg-[#63c763]" />
							</div>
						</div>
						<PanelHead label="Volume" />
						<PanelHead label="Settings" open />
						<div className="flex flex-col gap-[5px] pb-[9px] pr-[7px] pt-[7px]">
							<CheckRow label="Backface Culling" />
							<div className="flex h-[20px] items-center">
								<SetLabel label="Blend Mode" />
								<Teal className="flex-1 justify-between pl-[7px] pr-[1px]">
									Alpha Blend
									<Chev />
								</Teal>
							</div>
							<div className="flex h-[20px] items-center">
								<SetLabel label="Shadow Mode" />
								<Teal className="flex-1 justify-between pl-[7px] pr-[1px]">
									Opaque
									<Chev />
								</Teal>
							</div>
							<div className="flex h-[20px] items-center">
								<SetLabel label="Clip Threshold" dim />
								<div className="flex h-[20px] flex-1 items-center justify-center rounded-[4px] border border-[#333] bg-[linear-gradient(90deg,#445a7e_49%,#3a3a3a_49%)] text-[#7f8a99]">
									0.500
								</div>
							</div>
							<CheckRow label="Show Backface" on />
							<CheckRow label="Screen Space Refracti..." />
							<div className="flex h-[20px] items-center">
								<SetLabel label="Refraction Depth" />
								<div className="flex h-[20px] flex-1 items-center justify-center rounded-[4px] border border-[#3a3a3a] bg-[#4a4a4a] text-[#10c878]">
									0 m
								</div>
							</div>
							<CheckRow label="Subsurface Translucen..." />
							<div className="flex h-[20px] items-center">
								<SetLabel label="Pass Index" />
								<div className="flex h-[20px] flex-1 items-center justify-center rounded-[4px] border border-[#3a3a3a] bg-[#4a4a4a] text-[#10c878]">
									0
								</div>
							</div>
						</div>
						<PanelHead label="Line Art" />
						<PanelHead label="Viewport Display" />
						<PanelHead label="Custom Properties" />
					</div>
				</div>
			</div>
		</div>
	);
}

const MouseIc = () => (
	<svg width="10" height="14" viewBox="0 0 10 14" className="shrink-0">
		<rect x="0.7" y="0.7" width="8.6" height="12.6" rx="4" fill="none" stroke="#cfcfcf" strokeWidth="1.2" />
		<rect x="1.5" y="1.5" width="3.5" height="5" fill="#cfcfcf" />
	</svg>
);

function StatusBar() {
	return (
		<div className="flex h-[20px] shrink-0 items-center bg-[#262626] pt-px text-[#a8a8a8]">
			<div className="ml-[11px]">
				<MouseIc />
			</div>
			<span className="ml-[12px] w-[214px]">Set Active Modifier</span>
			<MouseIc />
			<span className="ml-[12px] w-[214px]">Pan View</span>
			<MouseIc />
			<span className="ml-[12px]">Context Menu</span>
			<span className="ml-auto mr-[8px]">Collection | Plane | Verts:12 | Faces:7 | Tris:14 | Objects:1/4 | 3.0.0 Alpha</span>
		</div>
	);
}

export default function App() {
	return (
		<div className="flex h-[962px] w-[1661px] flex-col overflow-hidden bg-[#101010] font-['Noto_Sans',sans-serif] text-[10.5px] leading-none">
			<TopBar />
			<div className="flex min-h-0 flex-1">
				<div className="flex w-[1373px] shrink-0 flex-col">
					<ViewportHeader />
					<Viewport />
					<div className="h-[4px] shrink-0" />
					<NodeHeader />
					<NodeCanvas />
				</div>
				<div className="ml-[3px] flex min-w-0 flex-1 flex-col gap-[7px] pt-px">
					<Outliner />
					<Properties />
				</div>
			</div>
			<StatusBar />
		</div>
	);
}
